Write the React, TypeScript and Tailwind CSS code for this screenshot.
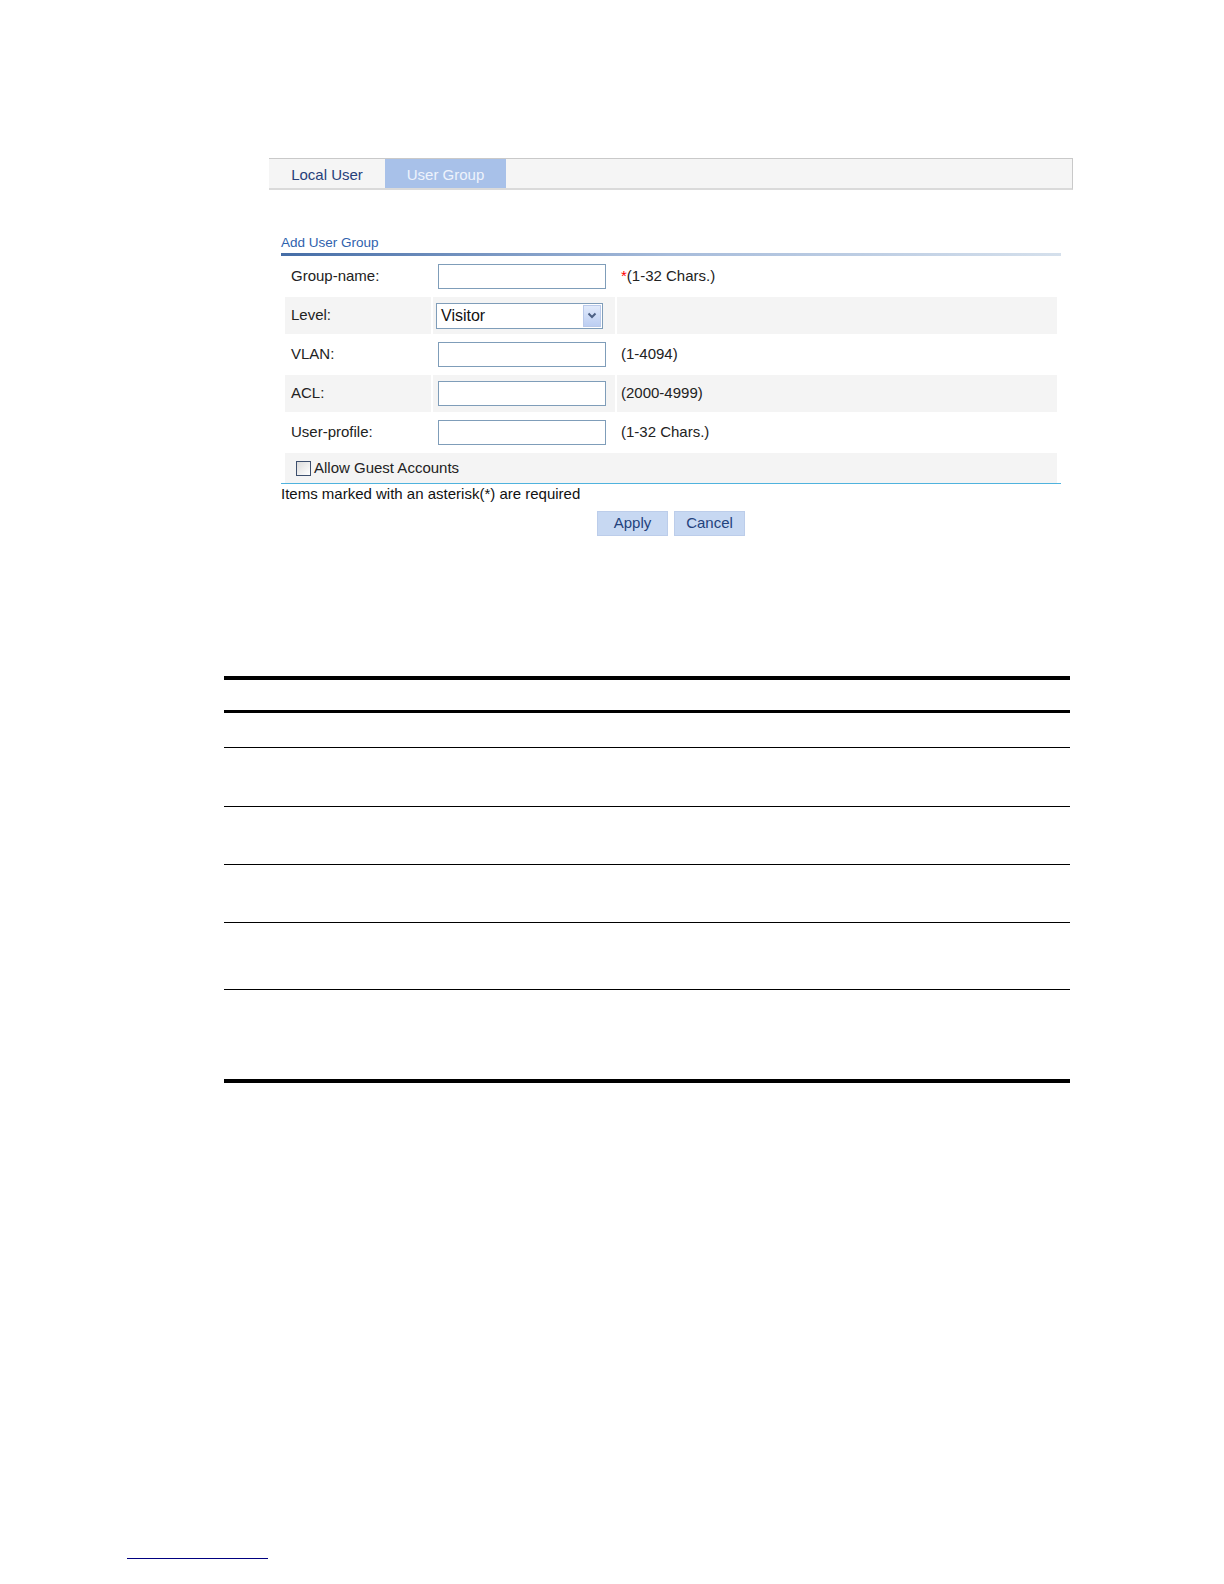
import React from 'react';

const rows = [
  { label: 'Group-name:', kind: 'input', note: '(1-32 Chars.)', required: true, shaded: false },
  { label: 'Level:', kind: 'select', note: '', required: false, shaded: true },
  { label: 'VLAN:', kind: 'input', note: '(1-4094)', required: false, shaded: false },
  { label: 'ACL:', kind: 'input', note: '(2000-4999)', required: false, shaded: true },
  { label: 'User-profile:', kind: 'input', note: '(1-32 Chars.)', required: false, shaded: false },
];

const FormRow: React.FC<{ row: (typeof rows)[number] }> = ({ row }) => {
  const cell = row.shaded ? 'bg-[#f4f4f4]' : '';
  return (
    <div className="flex h-[37px] gap-[2px]">
      <div className={`flex w-[146px] items-center pl-[6px] ${cell}`}>{row.label}</div>
      <div className={`flex w-[182px] items-center ${row.kind === 'select' ? 'pl-[3px]' : 'pl-[5px]'} ${cell}`}>
        {row.kind === 'input' ? (
          <div className="h-[25px] w-[168px] border border-[#7f9db9] bg-white" />
        ) : (
          <div className="flex h-[26px] w-[167px] items-center border border-[#7f9db9] bg-white">
            <span className="flex-1 pl-[4px] text-[16px] leading-none text-[#111]">Visitor</span>
            <span className="mr-[1px] flex h-[22px] w-[18px] items-center justify-center border border-[#b9c9ea] bg-gradient-to-b from-[#e1eafb] to-[#bccef2]">
              <svg width="10" height="7" viewBox="0 0 10 7">
                <path d="M1.5 1.5 L5 5 L8.5 1.5" fill="none" stroke="#4d6185" strokeWidth="2" />
              </svg>
            </span>
          </div>
        )}
      </div>
      <div className={`flex flex-1 items-center pl-[4px] ${cell}`}>
        {row.required && <span className="text-[#ff0000]">*</span>}
        {row.note}
      </div>
    </div>
  );
};

export default function App() {
  // heights include the bottom rule (border-box)
  const lines = [
    { h: 'h-[33px]', b: 'border-b-[3px]' },
    { h: 'h-[35px]', b: 'border-b' },
    { h: 'h-[59px]', b: 'border-b' },
    { h: 'h-[58px]', b: 'border-b' },
    { h: 'h-[58px]', b: 'border-b' },
    { h: 'h-[67px]', b: 'border-b' },
    { h: 'h-[93px]', b: 'border-b-[4px]' },
  ];

  return (
    <div className="relative h-[1584px] w-[1224px] bg-white font-['Liberation_Sans',Arial,sans-serif] text-[15px] text-[#222]">
      <div className="pt-[158px]">
        {/* tab bar */}
        <div className="ml-[269px] flex h-[32px] w-[804px] border-t border-r border-b-2 border-[#c9c9c9] border-b-[#dadada] bg-[#f5f5f5]">
          <div className="flex w-[116px] items-center justify-center pt-[3px] text-[15px] text-[#27407a]">Local User</div>
          <div className="flex w-[121px] items-center justify-center bg-[#a8c1e9] pt-[3px] text-[15px] text-[#eef3fc]">User Group</div>
        </div>

        {/* form */}
        <div className="ml-[281px] mt-[43px] w-[780px]">
          <div className="text-[13.5px] leading-[20px] text-[#2f62ad]">Add User Group</div>
          <div className="h-[3px] bg-gradient-to-r from-[#456da6] via-[#a7bcdb] to-[#d5e0ec]" />
          <div className="mt-[2px] flex flex-col gap-[2px] px-[4px]">
            {rows.map((r) => (
              <FormRow key={r.label} row={r} />
            ))}
            <div className="flex h-[30px] items-center bg-[#f4f4f4] pl-[11px]">
              <span className="mr-[3px] h-[15px] w-[15px] border border-[#3d4f6e] bg-gradient-to-br from-[#dcdcdc] to-white" />
              Allow Guest Accounts
            </div>
          </div>
          <div className="h-px bg-[#4fb3de]" />
          <div className="mt-[1px] leading-[18px] text-[#111]">Items marked with an asterisk(*) are required</div>
          <div className="mt-[8px] flex justify-center gap-[6px]">
            <button className="h-[25px] w-[71px] border border-[#bccdea] bg-[#c7d8f2] text-[15px] text-[#23427d]">Apply</button>
            <button className="h-[25px] w-[71px] border border-[#bccdea] bg-[#c7d8f2] text-[15px] text-[#23427d]">Cancel</button>
          </div>
        </div>

        {/* table */}
        <div className="ml-[224px] mt-[140px] w-[846px] border-t-[4px] border-black">
          {lines.map((l, i) => (
            <div key={i} className={`${l.h} ${l.b} border-black`} />
          ))}
        </div>
      </div>

      <div className="absolute left-[127px] top-[1558px] h-px w-[141px] bg-[#000080]" />
    </div>
  );
}
